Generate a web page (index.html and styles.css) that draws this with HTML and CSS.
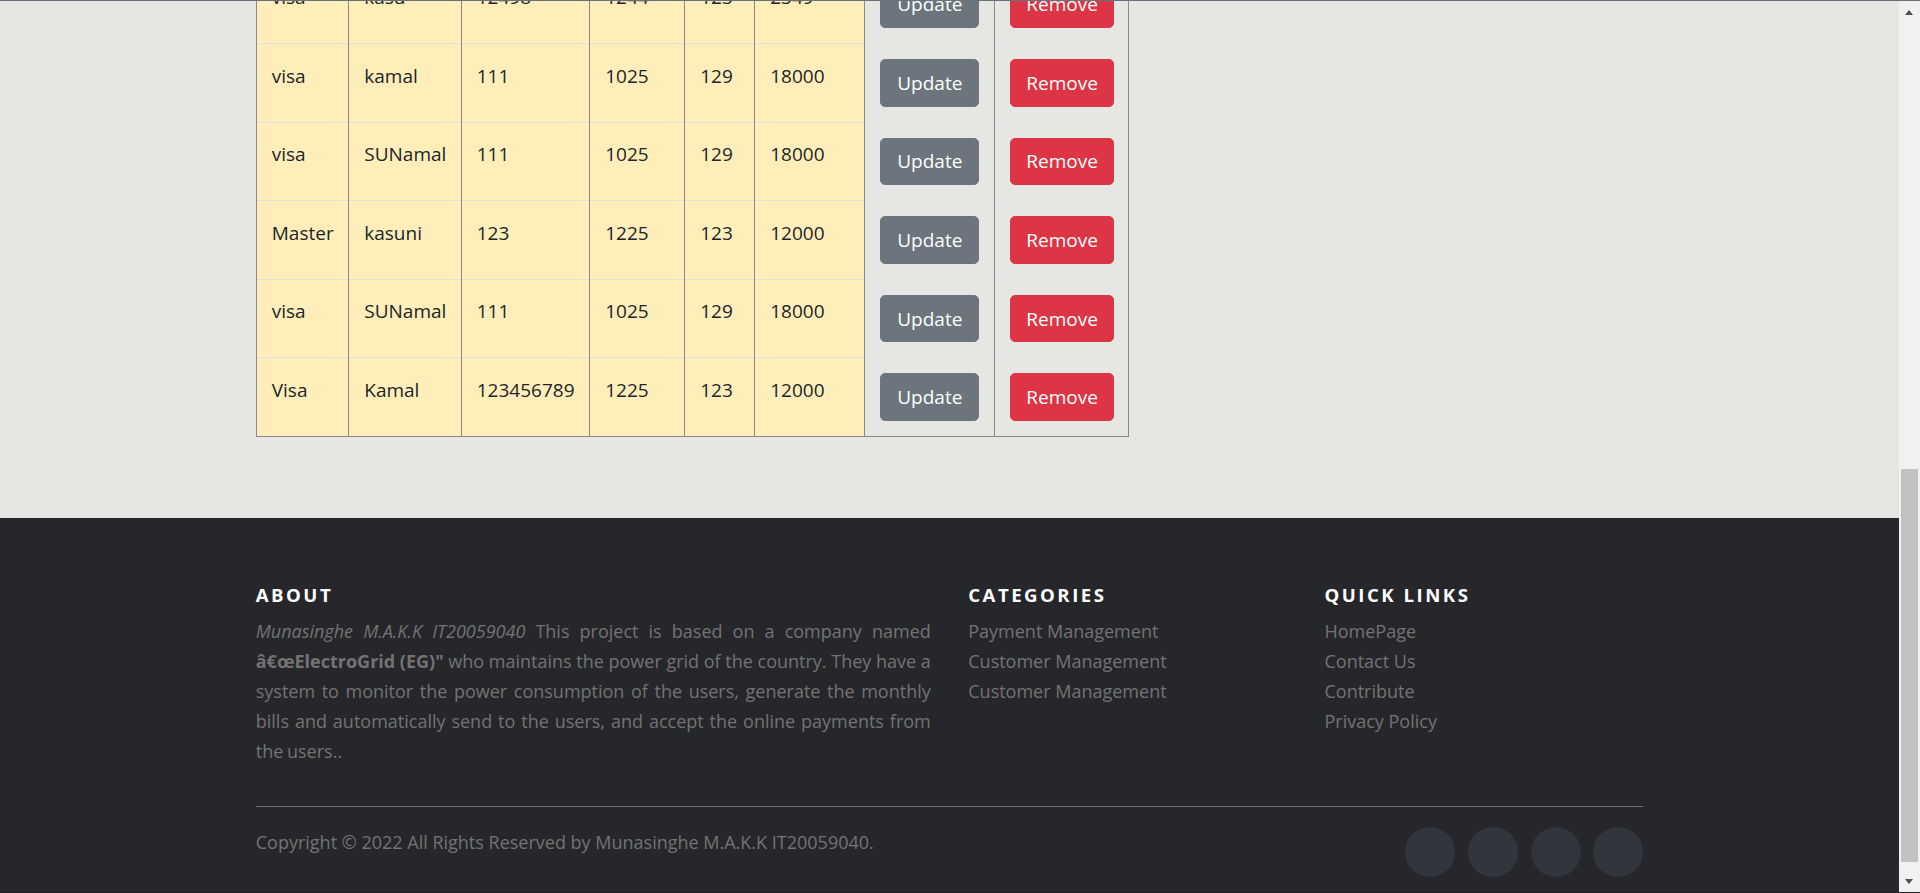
FILE: index.html
```html
<!DOCTYPE html>
<html lang="en">
<head>
<meta charset="utf-8">
<title>Payment Management</title>
<link rel="stylesheet" href="styles.css">
</head>
<body>
<nav class="navbar">
  <div class="container nav-inner">
    <span class="brand">ElectroGrid</span>
    <ul class="nav-links">
      <li><a href="#">Home</a></li>
      <li><a href="#">Payments</a></li>
      <li><a href="#">Customers</a></li>
    </ul>
  </div>
</nav>

<main class="container main">
  <h1 class="page-title">Payment Management</h1>
  <form class="pay-form">
    <div class="field"><label>Card Type</label><input class="input" type="text"></div>
    <div class="field"><label>Card Holder Name</label><input class="input" type="text"></div>
    <div class="field"><label>Card Number</label><input class="input" type="text"></div>
    <div class="field"><label>Expiry Date</label><input class="input" type="text"></div>
    <div class="field"><label>CVV</label><input class="input" type="text"></div>
    <div class="field"><label>Amount</label><input class="input" type="text"></div>
  </form>
  <div class="form-actions"><button class="btn btn-primary" type="button">Save</button></div>
  <h3 class="section-title">Payment Details</h3>

  <table class="pay-table">
    <colgroup>
      <col class="c1"><col class="c2"><col class="c3"><col class="c4"><col class="c5"><col class="c6"><col class="c7"><col class="c8">
    </colgroup>
    <thead>
      <tr><th>Type</th><th>Name</th><th>Number</th><th>Exp</th><th>CVV</th><th>Amount</th><th>Update</th><th>Remove</th></tr>
    </thead>
    <tbody>
      <tr><td class="warn">Master</td><td class="warn">nimal</td><td class="warn">4567</td><td class="warn">1124</td><td class="warn">456</td><td class="warn">5000</td><td><button class="btn btn-secondary" type="button">Update</button></td><td><button class="btn btn-danger" type="button">Remove</button></td></tr>
      <tr><td class="warn">visa</td><td class="warn">saman</td><td class="warn">222</td><td class="warn">0825</td><td class="warn">321</td><td class="warn">7500</td><td><button class="btn btn-secondary" type="button">Update</button></td><td><button class="btn btn-danger" type="button">Remove</button></td></tr>
      <tr><td class="warn">Master</td><td class="warn">kamal</td><td class="warn">789</td><td class="warn">1023</td><td class="warn">111</td><td class="warn">2500</td><td><button class="btn btn-secondary" type="button">Update</button></td><td><button class="btn btn-danger" type="button">Remove</button></td></tr>
      <tr><td class="warn">visa</td><td class="warn">nuwan</td><td class="warn">333</td><td class="warn">1226</td><td class="warn">222</td><td class="warn">9000</td><td><button class="btn btn-secondary" type="button">Update</button></td><td><button class="btn btn-danger" type="button">Remove</button></td></tr>
      <tr><td class="warn">visa</td><td class="warn">kasu</td><td class="warn">12498</td><td class="warn">1244</td><td class="warn">123</td><td class="warn">2349</td><td><button class="btn btn-secondary" type="button">Update</button></td><td><button class="btn btn-danger" type="button">Remove</button></td></tr>
      <tr><td class="warn">visa</td><td class="warn">kamal</td><td class="warn">111</td><td class="warn">1025</td><td class="warn">129</td><td class="warn">18000</td><td><button class="btn btn-secondary" type="button">Update</button></td><td><button class="btn btn-danger" type="button">Remove</button></td></tr>
      <tr><td class="warn">visa</td><td class="warn">SUNamal</td><td class="warn">111</td><td class="warn">1025</td><td class="warn">129</td><td class="warn">18000</td><td><button class="btn btn-secondary" type="button">Update</button></td><td><button class="btn btn-danger" type="button">Remove</button></td></tr>
      <tr><td class="warn">Master</td><td class="warn">kasuni</td><td class="warn">123</td><td class="warn">1225</td><td class="warn">123</td><td class="warn">12000</td><td><button class="btn btn-secondary" type="button">Update</button></td><td><button class="btn btn-danger" type="button">Remove</button></td></tr>
      <tr><td class="warn">visa</td><td class="warn">SUNamal</td><td class="warn">111</td><td class="warn">1025</td><td class="warn">129</td><td class="warn">18000</td><td><button class="btn btn-secondary" type="button">Update</button></td><td><button class="btn btn-danger" type="button">Remove</button></td></tr>
      <tr><td class="warn">Visa</td><td class="warn">Kamal</td><td class="warn">123456789</td><td class="warn">1225</td><td class="warn">123</td><td class="warn">12000</td><td><button class="btn btn-secondary" type="button">Update</button></td><td><button class="btn btn-danger" type="button">Remove</button></td></tr>
    </tbody>
  </table>
</main>

<footer class="site-footer">
  <div class="container">
    <div class="footer-grid">
      <div class="footer-col">
        <h6 class="footer-title">About</h6>
        <p class="about-text"><i>Munasinghe M.A.K.K IT20059040</i> This project is based on a company named <b>â€œElectroGrid (EG)"</b> who maintains the power grid of the country. They have a system to monitor the power consumption of the users, generate the monthly bills and automatically send to the users, and accept the online payments from the users..</p>
      </div>
      <div class="footer-col">
        <h6 class="footer-title">Categories</h6>
        <ul class="footer-links">
          <li><a href="#">Payment Management</a></li>
          <li><a href="#">Customer Management</a></li>
          <li><a href="#">Customer Management</a></li>
        </ul>
      </div>
      <div class="footer-col">
        <h6 class="footer-title">Quick Links</h6>
        <ul class="footer-links">
          <li><a href="#">HomePage</a></li>
          <li><a href="#">Contact Us</a></li>
          <li><a href="#">Contribute</a></li>
          <li><a href="#">Privacy Policy</a></li>
        </ul>
      </div>
    </div>
    <hr class="footer-rule">
    <div class="bottom-row">
      <p class="copyright">Copyright © 2022 All Rights Reserved by Munasinghe M.A.K.K IT20059040.</p>
      <ul class="social-icons">
        <li><a href="#" aria-label="Facebook"></a></li>
        <li><a href="#" aria-label="Twitter"></a></li>
        <li><a href="#" aria-label="Dribbble"></a></li>
        <li><a href="#" aria-label="LinkedIn"></a></li>
      </ul>
    </div>
  </div>
</footer>

<div class="window-edge window-edge-top" aria-hidden="true"></div>
<div class="fake-scrollbar" aria-hidden="true">
  <span class="sb-arrow sb-up"></span>
  <span class="sb-thumb"></span>
  <span class="sb-arrow sb-down"></span>
</div>
<div class="window-edge window-edge-bottom" aria-hidden="true"></div>

<script src="script.js"></script>
</body>
</html>
```

FILE: styles.css
```css
* { box-sizing: border-box; }

html, body { margin: 0; padding: 0; }

body {
  margin-right: 21px;
  background: #e6e7e2;
  color: #212529;
  font-family: "Open Sans", "Noto Sans", "Liberation Sans", sans-serif;
  font-size: 19px;
  line-height: 30px;
}

.container {
  width: 1387.5px;
  margin: 0 auto;
}

/* ---------- navbar (above the visible area) ---------- */
.navbar {
  background: #343a40;
  height: 70px;
}
.nav-inner {
  height: 100%;
  display: flex;
  align-items: center;
  justify-content: space-between;
}
.brand { color: #fff; font-size: 24px; font-weight: 700; }
.nav-links { list-style: none; margin: 0; padding: 0; display: flex; gap: 25px; }
.nav-links a { color: rgba(255,255,255,.7); text-decoration: none; }

/* ---------- main ---------- */
.main { padding: 25px 0 60.8px; }

.page-title {
  margin: 0 0 20px;
  font-size: 40px;
  line-height: 48px;
  font-weight: 500;
}

.pay-form {
  width: 873px;
  display: grid;
  grid-template-columns: 1fr 1fr;
  gap: 20px 30px;
  margin-bottom: 20px;
}
.field { display: flex; flex-direction: column; gap: 6px; }
.field label { line-height: 30px; }
.input {
  height: 47.5px;
  padding: 7.5px 15px;
  border: 1px solid #ced4da;
  border-radius: 5px;
  background: #fff;
  font: inherit;
}

.form-actions { margin-bottom: 30px; }

.section-title {
  margin: 0 0 20px;
  font-size: 35px;
  line-height: 42px;
  font-weight: 500;
}

/* ---------- table ---------- */
.pay-table {
  width: 873px;
  table-layout: fixed;
  border-collapse: collapse;
  margin-bottom: 20px;
  border-bottom: 1px solid #8a8a8a;
}
.c1 { width: 92.5px; }
.c2 { width: 112.5px; }
.c3 { width: 128.5px; }
.c4 { width: 95px; }
.c5 { width: 70px; }
.c6 { width: 110px; }
.c7 { width: 130px; }
.c8 { width: 134px; }

.pay-table th,
.pay-table td {
  padding: 15px;
  text-align: left;
  vertical-align: top;
  border-top: 1px solid #dee2e6;
  border-left: 1px solid #8a8a8a;
  border-right: 1px solid #8a8a8a;
  white-space: nowrap;
}
.pay-table th { font-weight: 700; }
.pay-table .warn {
  padding-top: 16.5px;
  padding-bottom: 13.5px;
  background: #ffeeba;
}

/* ---------- buttons ---------- */
.btn {
  display: inline-block;
  font: inherit;
  line-height: 30px;
  padding: 7.8px 16px;
  border: 1px solid transparent;
  border-radius: 5px;
  color: #fff;
  cursor: pointer;
  vertical-align: top;
}
.btn-primary { background: #007bff; border-color: #007bff; }
.btn-secondary { background: #6c757d; border-color: #6c757d; }
.btn-danger { padding-left: 15px; padding-right: 15px; background: #dc3545; border-color: #dc3545; }

/* ---------- footer ---------- */
.site-footer {
  background: #26272b;
  padding: 57.5px 0 45px;
  color: #737373;
  font-size: 18px;
  line-height: 30px;
}
.footer-grid {
  display: grid;
  grid-template-columns: 675px 318.75px 1fr;
  column-gap: 37.5px;
}
.footer-title {
  margin: 7.5px 0 8.75px;
  color: #fff;
  font-size: 18.6px;
  line-height: 24px;
  font-weight: 700;
  letter-spacing: 2.5px;
  text-transform: uppercase;
}
.about-text {
  margin: 0 0 20px;
  text-align: justify;
  word-spacing: -1px;
}
.footer-links {
  list-style: none;
  margin: 0 0 20px;
  padding: 0;
}
.footer-links a { color: #737373; text-decoration: none; }

.footer-rule {
  margin: 20px 0;
  border: 0;
  border-top: 1px solid #717173;
  height: 0;
}

.bottom-row {
  display: flex;
  justify-content: space-between;
  align-items: flex-start;
}
.copyright { margin: 0; }
.social-icons {
  list-style: none;
  margin: 0;
  padding: 0 0 5px;
  display: flex;
  gap: 12.7px;
}
.social-icons a {
  display: block;
  width: 50px;
  height: 50px;
  border-radius: 50%;
  background: #33353d;
}

/* ---------- window chrome drawn over the page ---------- */
.fake-scrollbar {
  position: fixed;
  top: 0;
  right: 0;
  width: 21px;
  height: 100%;
  background: #f1f1f1;
}
.sb-thumb {
  position: absolute;
  left: 2px;
  top: 469px;
  width: 17px;
  height: 393px;
  background: #c1c1c1;
}
.sb-arrow {
  position: absolute;
  left: 6px;
  width: 0;
  height: 0;
  border-left: 4.5px solid transparent;
  border-right: 4.5px solid transparent;
}
.sb-up { top: 10px; border-bottom: 5px solid #505050; }
.sb-down { top: 879px; border-top: 5px solid #505050; }

.window-edge {
  position: fixed;
  left: 0;
  right: 0;
  height: 1px;
  z-index: 2;
}
.window-edge-top { top: 0; background: #67737a; }
.window-edge-bottom { bottom: 0; background: #1f2023; }
```

FILE: script.js
```js
(function () {
  if ('scrollRestoration' in history) { history.scrollRestoration = 'manual'; }
  function place() {
    var footer = document.querySelector('.site-footer');
    if (!footer) { return; }
    var top = footer.getBoundingClientRect().top + window.pageYOffset;
    window.scrollTo(0, top - 518);
  }
  place();
  window.addEventListener('load', place);
})();
```
